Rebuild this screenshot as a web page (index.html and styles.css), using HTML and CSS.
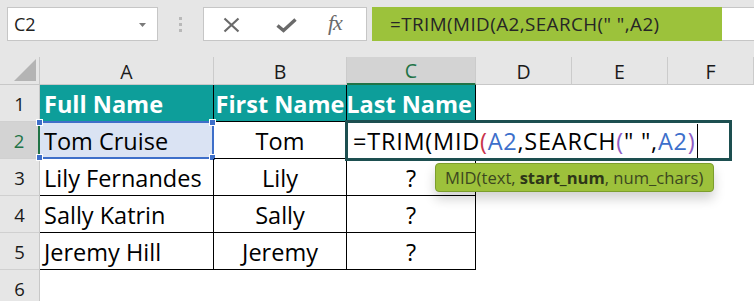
FILE: index.html
```html
<!DOCTYPE html>
<html>
<head>
<meta charset="utf-8">
<link rel="stylesheet" href="styles.css">
</head>
<body>
<div class="topbar">
  <div class="namebox">
    <span class="nb-text">C2</span>
    <svg class="nb-arrow" width="7" height="4" viewBox="0 0 7 4"><path d="M0 0H7L3.5 4Z" fill="#7a7a7a"/></svg>
  </div>
  <div class="sep"><i></i><i></i><i></i></div>
  <div class="fxbtns">
    <svg class="ic-x" width="17" height="16" viewBox="0 0 17 16"><path d="M1.5 1.5L15.5 14.5M15.5 1.5L1.5 14.5" stroke="#6a6a6a" stroke-width="2.2" fill="none"/></svg>
    <svg class="ic-check" width="21" height="15" viewBox="0 0 21 15"><path d="M1.5 7.5L7.5 12.5L19.5 1.5" stroke="#6a6a6a" stroke-width="3.4" fill="none" stroke-linejoin="miter"/></svg>
    <span class="fx">fx</span>
  </div>
  <div class="formula">
    <div class="formula-green">=TRIM(MID(A2,SEARCH(" ",A2)</div>
    <div class="formula-rest"></div>
  </div>
</div>

<div class="sheet">
  <div class="grid">
    <div class="corner"><svg width="22" height="22" viewBox="0 0 22 22"><path d="M22 0V22H0Z" fill="#b4b4b4"/></svg></div>
    <div class="colh">A</div>
    <div class="colh">B</div>
    <div class="colh active">C</div>
    <div class="colh">D</div>
    <div class="colh">E</div>
    <div class="colh">F</div>

    <div class="rowh">1</div>
    <div class="cell th left">Full Name</div>
    <div class="cell th">First Name</div>
    <div class="cell th last">Last Name</div>
    <div class="blank"></div><div class="blank"></div><div class="blank"></div>

    <div class="rowh active">2</div>
    <div class="cell left selected">Tom Cruise<span class="sel"><i class="h tl"></i><i class="h tr"></i><i class="h bl"></i><i class="h br"></i></span></div>
    <div class="cell">Tom</div>
    <div class="cell last"></div>
    <div class="blank"></div><div class="blank"></div><div class="blank"></div>

    <div class="rowh">3</div>
    <div class="cell left">Lily Fernandes</div>
    <div class="cell">Lily</div>
    <div class="cell last">?</div>
    <div class="blank"></div><div class="blank"></div><div class="blank"></div>

    <div class="rowh">4</div>
    <div class="cell left">Sally Katrin</div>
    <div class="cell">Sally</div>
    <div class="cell last">?</div>
    <div class="blank"></div><div class="blank"></div><div class="blank"></div>

    <div class="rowh">5</div>
    <div class="cell left">Jeremy Hill</div>
    <div class="cell">Jeremy</div>
    <div class="cell last">?</div>
    <div class="blank"></div><div class="blank"></div><div class="blank"></div>

    <div class="rowh">6</div>
    <div class="blank"></div><div class="blank"></div><div class="blank"></div>
    <div class="blank"></div><div class="blank"></div><div class="blank"></div>
  </div>

  <div class="editor"><span>=TRIM(MID</span><span class="c-red">(</span><span class="c-blue">A2</span><span>,SEARCH</span><span class="c-purple">(</span><span>" ",</span><span class="c-blue">A2</span><span class="c-purple">)</span><span class="caret"></span></div>

  <div class="tip">MID(text, <b>start_num</b>, num_chars)</div>
</div>
</body>
</html>
```

FILE: styles.css
```css
html, body {
  margin: 0;
  padding: 0;
}
body {
  width: 754px;
  height: 301px;
  overflow: hidden;
  background: #ffffff;
  font-family: "Open Sans", "Liberation Sans", sans-serif;
  color: #000;
}

/* ---------- top bar ---------- */
.topbar {
  height: 57px;
  box-sizing: border-box;
  padding-top: 7px;
  background: #e6e6e6;
  display: flex;
  align-items: flex-start;
}
.namebox {
  margin-left: 7px;
  width: 151px;
  height: 34px;
  box-sizing: border-box;
  background: #fff;
  border: 1px solid #c6c6c6;
  display: flex;
  align-items: center;
  justify-content: space-between;
  padding: 0 11px 0 6px;
}
.nb-text {
  font-size: 18px;
  color: #222;
}
.nb-arrow {
  margin-top: 1px;
}
.sep {
  width: 45px;
  height: 34px;
  display: flex;
  flex-direction: column;
  align-items: center;
  justify-content: center;
  gap: 3px;
}
.sep i {
  display: block;
  width: 3px;
  height: 3px;
  background: #b9b9b9;
}
.fxbtns {
  width: 164px;
  height: 34px;
  box-sizing: border-box;
  background: #fff;
  border: 1px solid #c6c6c6;
  display: flex;
  align-items: center;
  padding-left: 19px;
}
.ic-x { margin-top: 1px; }
.ic-check { margin-left: 36px; margin-top: 3px; }
.fx {
  margin-left: 31px;
  font-family: "Liberation Serif", "DejaVu Serif", serif;
  font-style: italic;
  font-size: 22px;
  color: #6a6a6a;
  letter-spacing: -1px;
  margin-top: -2px;
}
.formula {
  margin-left: 5px;
  flex: 1;
  height: 34px;
  display: flex;
}
.formula-green {
  width: 350px;
  height: 34px;
  box-sizing: border-box;
  background: #9cc23b;
  padding-left: 18px;
  font-size: 18.8px;
  letter-spacing: 0.45px;
  line-height: 34px;
  color: #262626;
  white-space: nowrap;
}
.formula-rest {
  flex: 1;
  height: 34px;
  box-sizing: border-box;
  background: #fff;
  border-top: 1px solid #c6c6c6;
  border-bottom: 1px solid #c6c6c6;
}

/* ---------- sheet ---------- */
.sheet {
  position: relative;
}
.grid {
  display: grid;
  grid-template-columns: 40px 174px 133px 129px 96px 96px 86px;
  grid-template-rows: 28px repeat(6, 37px);
}
.grid > div {
  box-sizing: border-box;
}
.corner {
  background: #e6e6e6;
  border-right: 1px solid #c8c8c8;
  border-bottom: 1px solid #c8c8c8;
  display: flex;
  align-items: flex-end;
  justify-content: flex-end;
  padding: 0 3px 3px 0;
}
.colh {
  background: #e6e6e6;
  border-right: 1px solid #cbcbcb;
  border-bottom: 1px solid #c8c8c8;
  display: flex;
  align-items: center;
  justify-content: center;
  font-size: 19.5px;
  color: #1a1a1a;
  padding-top: 1px;
}
.colh.active {
  background: #d3d3d3;
  color: #217346;
  border-bottom: 2px solid #217346;
}
.rowh {
  background: #e6e6e6;
  border-right: 1px solid #c8c8c8;
  border-bottom: 1px solid #d0d0d0;
  display: flex;
  align-items: center;
  justify-content: center;
  font-size: 18.5px;
  color: #1a1a1a;
}
.rowh.active {
  background: #d3d3d3;
  color: #217346;
  border-right: 2px solid #217346;
}
.cell {
  border-right: 1px solid #000;
  border-bottom: 1px solid #000;
  display: flex;
  align-items: center;
  justify-content: center;
  font-size: 23.5px;
  white-space: nowrap;
  position: relative;
  padding-top: 1px;
}
.cell.left {
  justify-content: flex-start;
  padding-left: 4px;
}
.cell.th {
  background: #0d9e9a;
  color: #fff;
  font-weight: 700;
}
.cell.th.last {
  justify-content: flex-end;
  padding-right: 3px;
}
.cell.selected {
  background: #dae3f3;
}
.blank {
  background: #fff;
}

/* selection outline */
.sel {
  position: absolute;
  left: -1px;
  top: -1px;
  right: -1px;
  bottom: -1px;
  border-top: 2px solid #3e6fc9;
  border-bottom: 2px solid #3e6fc9;
  border-right: 2px solid #3e6fc9;
  pointer-events: none;
}
.sel .h {
  position: absolute;
  width: 5px;
  height: 5px;
  background: #3e6fc9;
  border: 1px solid #fff;
}
.sel .tl { left: -3px; top: -4px; }
.sel .tr { right: -4px; top: -4px; }
.sel .bl { left: -3px; bottom: -4px; }
.sel .br { right: -4px; bottom: -4px; }

/* in-cell editor */
.editor {
  position: absolute;
  left: 345px;
  top: 63px;
  width: 387px;
  height: 41px;
  box-sizing: border-box;
  border: 3px solid #1d4f50;
  background: #fff;
  display: flex;
  align-items: center;
  padding-left: 5px;
  font-size: 23.5px;
  letter-spacing: 0.75px;
  white-space: nowrap;
  z-index: 2;
}
.c-red { color: #c9344b; }
.c-blue { color: #3d6fcb; }
.c-purple { color: #8d5cc4; }
.caret {
  display: inline-block;
  width: 1px;
  height: 34px;
  background: #000;
  margin-left: 2px;
}

/* tooltip */
.tip {
  position: absolute;
  left: 435px;
  top: 106px;
  width: 279px;
  height: 29px;
  box-sizing: border-box;
  background: #9dc13b;
  border: 1px solid #7c9e2d;
  border-radius: 4px;
  box-shadow: 0 7px 12px rgba(0, 0, 0, 0.18);
  display: flex;
  align-items: center;
  padding-left: 9px;
  font-size: 16.6px;
  color: #3c4720;
  white-space: nowrap;
  z-index: 3;
}
.tip b {
  font-weight: 700;
  color: #2e3618;
  margin: 0 0 0 4px;
}
```
